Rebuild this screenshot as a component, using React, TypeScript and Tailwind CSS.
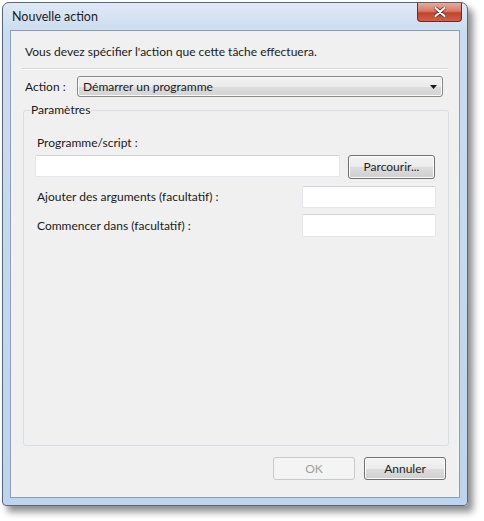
const font = { fontFamily: 'Lato, "Noto Sans", sans-serif' }

function Win7Button({ label, disabled, className }: { label: string; disabled?: boolean; className?: string }) {
  return (
    <div
      className={
        'flex items-center justify-center rounded-[3px] border text-[12px] ' +
        (disabled
          ? 'border-[#c5c9cc] bg-[#f4f4f4] text-[#a0a0a0] '
          : 'border-[#707070] bg-[linear-gradient(#f3f3f3_0%,#ebebeb_50%,#dddddd_51%,#cfcfcf_100%)] text-[#1e1e1e] shadow-[inset_0_0_0_1px_#fcfcfc] ') +
        (className ?? '')
      }
    >
      {label}
    </div>
  )
}

function TextBox({ className }: { className?: string }) {
  return (
    <div
      className={
        'rounded-[2px] border border-[#e3e6ea] border-t-[#d2d5d9] bg-white ' + (className ?? '')
      }
    />
  )
}

export default function App() {
  return (
    <div className="h-[521px] w-[484px] bg-white pl-[2px] pt-[2px]" style={font}>
      <div className="flex h-[504px] w-[466px] flex-col rounded-t-[7px] rounded-b-[4px] border border-[#56687c] bg-[linear-gradient(#dfe9f5_0%,#cadcf0_6%,#bed4ec_100%)] shadow-[5px_6px_7px_rgba(0,0,0,0.45)]">
        {/* title bar */}
        <div className="flex h-[27px] items-start justify-between">
          <span className="pl-[9px] pt-[6px] text-[12.5px] leading-[16px] text-[#1c1c1c]">Nouvelle action</span>
          <div className="mr-[5px] flex h-[19px] w-[45px] items-center justify-center rounded-b-[4px] border border-t-0 border-[#6b2a22] bg-[linear-gradient(#e9a99a_0%,#d67b66_45%,#c4422b_55%,#d0604a_100%)]">
            <svg width="12" height="10" viewBox="0 0 12 10">
              <path d="M1.5 1 L10.5 9 M10.5 1 L1.5 9" stroke="#5a2018" strokeWidth="3.6" strokeLinecap="round" />
              <path d="M1.5 1 L10.5 9 M10.5 1 L1.5 9" stroke="#ffffff" strokeWidth="2.2" strokeLinecap="round" />
            </svg>
          </div>
        </div>

        {/* client area */}
        <div className="mx-[7px] flex h-[468px] flex-col border border-[#8ba0b8] bg-[#f0f0f0] text-[12px] leading-[16px] text-[#1a1a1a]">
          <p className="pl-[14px] pt-[13px]">Vous devez spécifier l'action que cette tâche effectuera.</p>

          <div className="mx-[11px] mt-[8px] border-t border-[#d9d9d9] border-b-white border-b" />

          <div className="mt-[6px] flex items-center pl-[14px] pr-[16px]">
            <span className="w-[52px]">Action :</span>
            <div className="flex h-[21px] flex-1 items-center justify-between rounded-[3px] border border-[#8a8a8a] bg-[linear-gradient(#f2f2f2_0%,#ebebeb_50%,#dddddd_51%,#d3d3d3_100%)] pl-[5px] pr-[5px] shadow-[inset_0_0_0_1px_#fafafa]">
              <span>Démarrer un programme</span>
              <svg width="7" height="4" viewBox="0 0 7 4">
                <path d="M0 0 H7 L3.5 4 Z" fill="#1a1a1a" />
              </svg>
            </div>
          </div>

          <fieldset className="ml-[12px] mr-[10px] mt-[5px] h-[344px] rounded-[3px] border border-[#d5dfe5] px-[6px]">
            <legend className="px-[1px] leading-[16px]">Paramètres</legend>
            <div className="flex flex-col pl-[5px] pr-[6px]">
              <span className="mt-[17px] pl-[2px]">Programme/script :</span>
              <div className="mt-[4px] flex items-start">
                <TextBox className="h-[22px] w-[305px]" />
                <Win7Button label="Parcourir..." className="ml-[8px] h-[24px] w-[87px]" />
              </div>
              <div className="mt-[7px] flex items-center justify-between">
                <span className="pl-[2px]">Ajouter des arguments (facultatif) :</span>
                <TextBox className="h-[22px] w-[134px]" />
              </div>
              <div className="mt-[6px] flex items-center justify-between">
                <span className="pl-[2px]">Commencer dans (facultatif) :</span>
                <TextBox className="h-[23px] w-[134px]" />
              </div>
            </div>
          </fieldset>

          <div className="mt-[11px] flex justify-end gap-[9px] pr-[13px]">
            <Win7Button label="OK" disabled className="h-[23px] w-[82px]" />
            <Win7Button label="Annuler" className="h-[23px] w-[82px]" />
          </div>
        </div>
      </div>
    </div>
  )
}
